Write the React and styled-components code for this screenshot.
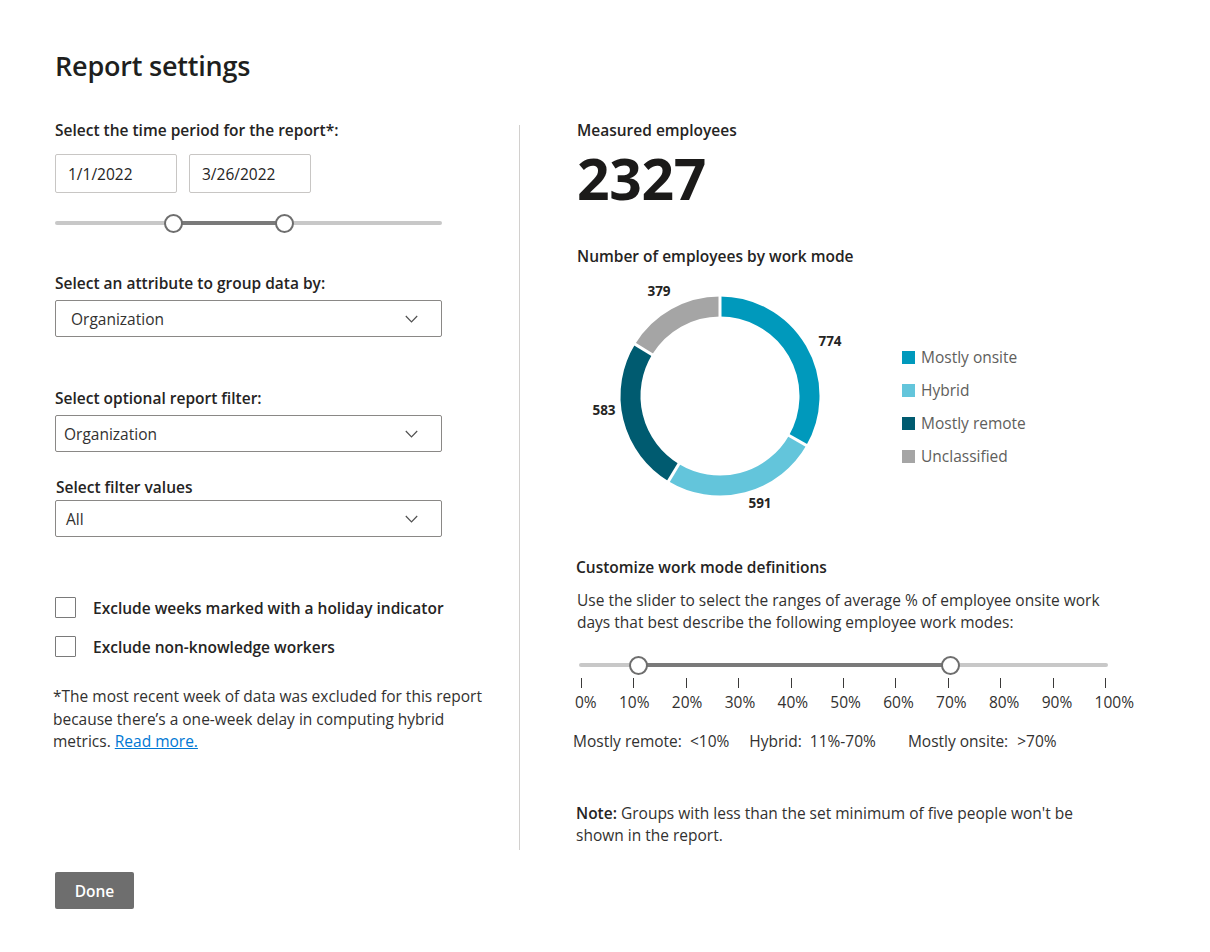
import styled, { createGlobalStyle } from "styled-components";

const GlobalStyle = createGlobalStyle`
  body {
    margin: 0;
    background: #ffffff;
    font-family: "Open Sans", "Noto Sans", sans-serif;
    color: #252423;
  }
  * { box-sizing: border-box; }
`;

const modes = [
  { name: "Mostly onsite", value: 774, color: "#0099bc", label: [253, 64] },
  { name: "Hybrid", value: 591, color: "#63c5db", label: [183, 226] },
  { name: "Mostly remote", value: 583, color: "#005b70", label: [27, 133] },
  { name: "Unclassified", value: 379, color: "#a5a5a5", label: [82, 14] },
];

const ticks = ["0%", "10%", "20%", "30%", "40%", "50%", "60%", "70%", "80%", "90%", "100%"];

function Donut() {
  const cx = 143;
  const cy = 119;
  const r = 89.5;
  const total = modes.reduce((s, m) => s + m.value, 0);
  let acc = 0;
  const arcs = [];
  const cuts = [];
  modes.forEach((m) => {
    const a0 = (acc / total) * Math.PI * 2;
    acc += m.value;
    const a1 = (acc / total) * Math.PI * 2;
    const p0 = [cx + r * Math.sin(a0), cy - r * Math.cos(a0)];
    const p1 = [cx + r * Math.sin(a1), cy - r * Math.cos(a1)];
    const large = a1 - a0 > Math.PI ? 1 : 0;
    arcs.push(
      <path
        key={m.name}
        d={`M${p0[0]} ${p0[1]} A${r} ${r} 0 ${large} 1 ${p1[0]} ${p1[1]}`}
        fill="none"
        stroke={m.color}
        strokeWidth="20"
      />
    );
    cuts.push(
      <line
        key={m.name + "cut"}
        x1={cx + 76 * Math.sin(a1)}
        y1={cy - 76 * Math.cos(a1)}
        x2={cx + 103 * Math.sin(a1)}
        y2={cy - 103 * Math.cos(a1)}
        stroke="#ffffff"
        strokeWidth="3"
      />
    );
  });

  return (
    <svg width="280" height="240" viewBox="0 0 280 240">
      {arcs}
      {cuts}
      {modes.map((m) => (
        <text
          key={m.name + "lbl"}
          x={m.label[0]}
          y={m.label[1]}
          textAnchor="middle"
          dominantBaseline="central"
          fontFamily="Open Sans, sans-serif"
          fontWeight="700"
          fontSize="13.5"
          fill="#252423"
        >
          {m.value}
        </text>
      ))}
    </svg>
  );
}

function Chevron() {
  return (
    <svg width="13" height="8" viewBox="0 0 13 8">
      <path d="M0.8 1 L6.5 6.8 L12.2 1" fill="none" stroke="#505050" strokeWidth="1.2" />
    </svg>
  );
}

function Dropdown({ value, pad }) {
  return (
    <Select $pad={pad}>
      <span>{value}</span>
      <Chevron />
    </Select>
  );
}

export default function App() {
  return (
    <>
      <GlobalStyle />
      <Page>
        <Title>Report settings</Title>
        <Columns>
          <LeftCol>
            <Label>Select the time period for the report*:</Label>
            <DateRow>
              <DateBox>1/1/2022</DateBox>
              <DateBox>3/26/2022</DateBox>
            </DateRow>
            <Range $mt={20}>
              <Track />
              <Active $from={30.5} $to={59.2} />
              <Thumb $pos={30.5} />
              <Thumb $pos={59.2} />
            </Range>

            <Label $mt={40}>Select an attribute to group data by:</Label>
            <Dropdown value="Organization" pad={15} />

            <Label $mt={51}>Select optional report filter:</Label>
            <Dropdown value="Organization" pad={8} />

            <Label $mt={25} $mb={3} $ml={1}>
              Select filter values
            </Label>
            <Dropdown value="All" pad={10} />

            <CheckRow $mt={60}>
              <Box />
              <CheckLabel>Exclude weeks marked with a holiday indicator</CheckLabel>
            </CheckRow>
            <CheckRow $mt={18}>
              <Box />
              <CheckLabel>Exclude non-knowledge workers</CheckLabel>
            </CheckRow>

            <Footnote>
              *The most recent week of data was excluded for this report because there’s a
              one-week delay in computing hybrid metrics. <Link href="#">Read more.</Link>
            </Footnote>
          </LeftCol>

          <Divider />

          <RightCol>
            <Label>Measured employees</Label>
            <BigNumber>2327</BigNumber>
            <Label $mt={38}>Number of employees by work mode</Label>

            <ChartRow>
              <Donut />
              <Legend>
                {modes.map((m) => (
                  <LegendItem key={m.name}>
                    <Swatch $color={m.color} />
                    {m.name}
                  </LegendItem>
                ))}
              </Legend>
            </ChartRow>

            <Label $mt={40} $ml={-1}>
              Customize work mode definitions
            </Label>
            <Body $mt={5}>
              Use the slider to select the ranges of average % of employee onsite work days
              that best describe the following employee work modes:
            </Body>

            <WideSlider>
              <Range $mt={22}>
                <Track />
                <Active $from={11.3} $to={70.3} />
                <Thumb $pos={11.3} />
                <Thumb $pos={70.3} />
              </Range>
              <TickRow>
                {ticks.map((t) => (
                  <Tick key={t} />
                ))}
              </TickRow>
              <TickLabels>
                {ticks.map((t) => (
                  <span key={t}>{t}</span>
                ))}
              </TickLabels>
            </WideSlider>

            <Summary>
              <Mode>
                Mostly remote:<Value $gap={8}>&lt;10%</Value>
              </Mode>
              <Mode>
                Hybrid:<Value $gap={8}>11%-70%</Value>
              </Mode>
              <Mode $ml={12}>
                Mostly onsite:<Value $gap={9}>&gt;70%</Value>
              </Mode>
            </Summary>

            <Body $mt={51} $ml={-1}>
              <strong>Note:</strong> Groups with less than the set minimum of five people won't
              be shown in the report.
            </Body>
          </RightCol>
        </Columns>

        <DoneButton>Done</DoneButton>
      </Page>
    </>
  );
}

const Page = styled.div`
  width: 1210px;
  min-height: 952px;
  padding: 46px 0 0 55px;
`;

const Title = styled.h1`
  margin: 0;
  font-size: 27px;
  line-height: 40px;
  font-weight: 600;
  color: #201f1e;
  letter-spacing: -0.2px;
`;

const Columns = styled.div`
  display: grid;
  grid-template-columns: 464px 1px 1fr;
  margin-top: 34px;
`;

const LeftCol = styled.div`
  display: flex;
  flex-direction: column;
  padding-right: 77px;
`;

const Divider = styled.div`
  background: #d2d0ce;
  margin-top: 5px;
  height: 725px;
`;

const RightCol = styled.div`
  display: flex;
  flex-direction: column;
  padding-left: 57px;
`;

const Label = styled.div`
  font-size: 15.5px;
  line-height: 20px;
  font-weight: 600;
  color: #252423;
  margin-top: ${(p) => p.$mt || 0}px;
  margin-bottom: ${(p) => (p.$mb === undefined ? 7 : p.$mb)}px;
  margin-left: ${(p) => p.$ml || 0}px;
`;

const DateRow = styled.div`
  display: flex;
  gap: 12px;
  margin-top: 7px;
`;

const DateBox = styled.div`
  width: 122px;
  height: 39px;
  border: 1px solid #c8c6c4;
  border-radius: 2px;
  padding: 0 12px;
  display: flex;
  align-items: center;
  font-size: 15.5px;
  color: #252423;
`;

const Range = styled.div`
  position: relative;
  height: 20px;
  margin-top: ${(p) => p.$mt || 0}px;
`;

const Track = styled.div`
  position: absolute;
  left: 0;
  right: 0;
  top: 8px;
  height: 4px;
  border-radius: 2px;
  background: #c8c8c8;
`;

const Active = styled.div`
  position: absolute;
  top: 8px;
  height: 4px;
  left: ${(p) => p.$from}%;
  width: ${(p) => p.$to - p.$from}%;
  background: #7a7a7a;
`;

const Thumb = styled.div`
  position: absolute;
  top: 1px;
  left: ${(p) => p.$pos}%;
  width: 19px;
  height: 19px;
  margin-left: -9.5px;
  border-radius: 50%;
  background: #ffffff;
  border: 2px solid #6e6e6e;
`;

const Select = styled.div`
  height: 37px;
  border: 1px solid #8a8886;
  border-radius: 2px;
  display: flex;
  align-items: center;
  justify-content: space-between;
  padding: 0 23px 0 ${(p) => p.$pad}px;
  font-size: 15.5px;
  color: #323130;
`;

const CheckRow = styled.div`
  display: flex;
  align-items: center;
  gap: 17px;
  margin-top: ${(p) => p.$mt}px;
`;

const Box = styled.div`
  flex: none;
  width: 21px;
  height: 21px;
  border: 1px solid #7a7a7a;
  border-radius: 1px;
`;

const CheckLabel = styled.span`
  font-size: 15.5px;
  line-height: 20px;
  font-weight: 600;
  color: #252423;
  white-space: nowrap;
`;

const Footnote = styled.p`
  width: 440px;
  margin: 28px 0 0 -2px;
  font-size: 15.5px;
  line-height: 22.5px;
  color: #323130;
`;

const Link = styled.a`
  color: #0078d4;
  text-decoration: underline;
`;

const BigNumber = styled.div`
  font-size: 57px;
  line-height: 60px;
  font-weight: 700;
  color: #1b1a19;
  margin-top: 1px;
  letter-spacing: -0.3px;
`;

const ChartRow = styled.div`
  display: flex;
  align-items: flex-start;
  margin-top: 4px;
`;

const Legend = styled.div`
  display: flex;
  flex-direction: column;
  gap: 13px;
  margin: 70px 0 0 45px;
`;

const LegendItem = styled.div`
  display: flex;
  align-items: center;
  gap: 6px;
  height: 20px;
  font-size: 15.5px;
  color: #605e5c;
`;

const Swatch = styled.span`
  width: 13px;
  height: 13px;
  background: ${(p) => p.$color};
`;

const Body = styled.p`
  margin: ${(p) => p.$mt || 0}px 0 0 ${(p) => p.$ml || 0}px;
  font-size: 15.5px;
  line-height: 22px;
  color: #323130;
  max-width: 540px;

  strong {
    font-weight: 600;
    color: #252423;
  }
`;

const WideSlider = styled.div`
  width: 529px;
  margin-left: 2px;
`;

const TickRow = styled.div`
  display: flex;
  justify-content: space-between;
  padding: 0 2px;
  margin-top: 3px;
`;

const Tick = styled.span`
  width: 1px;
  height: 10px;
  background: #3b3a39;
`;

const TickLabels = styled.div`
  display: flex;
  justify-content: space-between;
  width: 559px;
  margin: 4px 0 0 -4px;
  font-size: 15.5px;
  line-height: 20px;
  color: #323130;
`;

const Summary = styled.div`
  display: flex;
  gap: 20px;
  margin: 19px 0 0 -4px;
  font-size: 15.5px;
  line-height: 20px;
  color: #323130;
`;

const Mode = styled.span`
  display: flex;
  margin-left: ${(p) => p.$ml || 0}px;
`;

const Value = styled.span`
  margin-left: ${(p) => p.$gap}px;
`;

const DoneButton = styled.button`
  margin-top: 22px;
  width: 79px;
  height: 37px;
  border: none;
  border-radius: 2px;
  background: #6e6e6e;
  color: #ffffff;
  font-family: inherit;
  font-size: 15.5px;
  font-weight: 600;
`;
